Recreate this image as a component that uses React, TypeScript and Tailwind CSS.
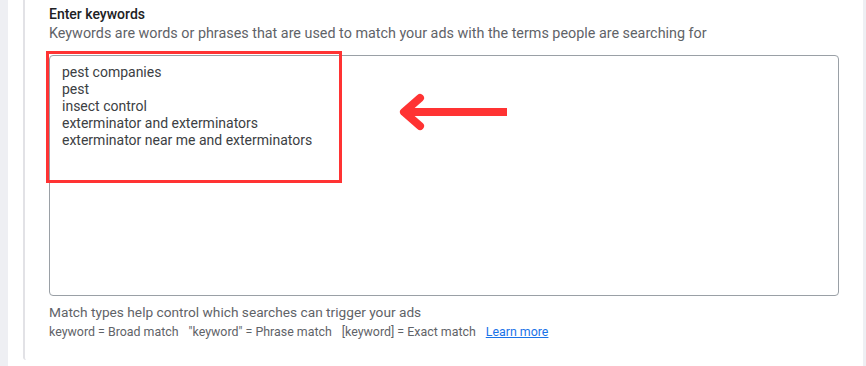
import React from 'react';

const keywords = [
  'pest companies',
  'pest',
  'insect control',
  'exterminator and exterminators',
  'exterminator near me and exterminators',
];

export default function App() {
  return (
    <div className="relative w-[866px] h-[366px] bg-white flex font-['Roboto',sans-serif] overflow-hidden">
      <div className="w-[8px] bg-[#eeeff3]" />
      <div className="flex-1 pl-[15px]">
        <div className="h-[360px] border-l-2 border-[#e2e2e6] rounded-bl-[3px] pl-[24px] pr-[24px]">
          <div className="pt-[4px] text-[14px] leading-[20px] font-medium text-[#202124]">Enter keywords</div>
          <div className="text-[14.35px] leading-[20px] text-[#5f6368]">
            Keywords are words or phrases that are used to match your ads with the terms people are searching for
          </div>
          <div className="mt-[11px] w-[790px] h-[241px] border border-[#9aa0a6] rounded-[4px] pl-[12px] pt-[8px] text-[14px] leading-[17px] text-[#3c4043]">
            {keywords.map((k) => (
              <div key={k}>{k}</div>
            ))}
          </div>
          <div className="mt-[6px] leading-[20px] text-[#5f6368]">
            <div className="text-[13.7px]">Match types help control which searches can trigger your ads</div>
            <div className="flex gap-[10px] text-[12.4px]">
              <span>keyword = Broad match</span>
              <span>"keyword" = Phrase match</span>
              <span>[keyword] = Exact match</span>
              <a href="#" className="text-[#1a73e8] underline">Learn more</a>
            </div>
          </div>
        </div>
      </div>
      <div className="w-[3px] bg-[#eeeff3]" />

      {/* annotation overlay */}
      <div className="absolute left-[46px] top-[51px] w-[296px] h-[132px] border-[3px] border-[#ff3333]" />
      <svg className="absolute left-[396px] top-[92px]" width="114" height="40" viewBox="0 0 114 40">
        <path d="M8 20 H111" stroke="#ff3333" strokeWidth="8" />
        <path d="M24 6 L8 20 L24 34" fill="none" stroke="#ff3333" strokeWidth="8" strokeLinecap="round" strokeLinejoin="round" />
      </svg>
    </div>
  );
}
